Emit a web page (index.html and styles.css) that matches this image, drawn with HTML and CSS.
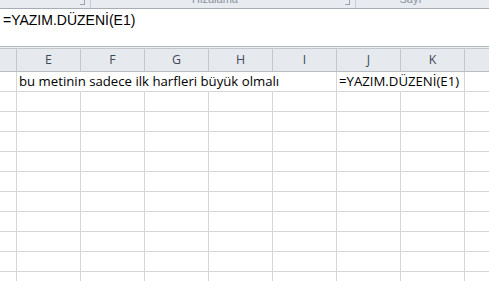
FILE: index.html
```
<!DOCTYPE html>
<html lang="tr">
<head>
  <meta charset="UTF-8">
  <title>YAZIM.DÜZENİ</title>
  <link rel="stylesheet" href="styles.css">
</head>
<body>
  <div class="ribbon">
    <div class="grup g1"><span class="ok"></span></div>
    <div class="grup g2"><span class="baslik">Hizalama</span><span class="ok"></span></div>
    <div class="grup g3"><span class="baslik">Sayı</span></div>
  </div>

  <div class="formul">=YAZIM.DÜZENİ(E1)</div>
  <div class="ayrac"></div>

  <div class="sayfa">
    <div class="hucre kose"></div>
    <div class="hucre bas">E</div>
    <div class="hucre bas">F</div>
    <div class="hucre bas">G</div>
    <div class="hucre bas">H</div>
    <div class="hucre bas">I</div>
    <div class="hucre bas">J</div>
    <div class="hucre bas">K</div>
    <div class="hucre bas"></div>
  </div>
  <div class="sayfa" id="satirlar">
    <div class="hucre no"></div>
    <div class="hucre tasan bos">bu metinin sadece ilk harfleri büyük olmalı</div>
    <div class="hucre bos"></div>
    <div class="hucre bos"></div>
    <div class="hucre bos"></div>
    <div class="hucre"></div>
    <div class="hucre tasan bos">=YAZIM.DÜZENİ(E1)</div>
    <div class="hucre"></div>
    <div class="hucre"></div>
  </div>

  <script>
    // bos satirlari doldur
    const satirlar = document.getElementById('satirlar');
    for (let r = 0; r < 10; r++) {
      satirlar.innerHTML += '<div class="hucre no"></div>' + '<div class="hucre"></div>'.repeat(8);
    }
  </script>
</body>
</html>
```

FILE: styles.css
```
body {
  margin: 0;
  background-color: #fff;
  font-family: "Liberation Sans", Arial, sans-serif;
  overflow: hidden;
}
.ribbon {
  display: flex;
  height: 8px;
  background-color: #e8ecf1;
  border-bottom: 1px solid #a6adb6;
  overflow: hidden;
}
.grup {
  display: flex;
  justify-content: center;
  position: relative;
  border-right: 1px solid #c8ced6;
  box-sizing: border-box;
}
.g1 { width: 91px; }
.g2 { width: 265px; padding-right: 16px; }
.g3 { width: 133px; padding-right: 24px; border-right: none; }
.baslik {
  font-size: 11px;
  color: #8a929c;
  line-height: 11px;
  margin-top: -6px;
}
.ok {
  position: absolute;
  right: 5px;
  top: 0;
  width: 4px;
  height: 4px;
  border-right: 1px solid #9aa2ac;
  border-bottom: 1px solid #9aa2ac;
}
.formul {
  height: 38px;
  padding: 3px 3px 0;
  box-sizing: border-box;
  font-size: 14px;
  line-height: 17px;
  color: #000;
  border-bottom: 1px solid #b2b8bf;
}
.ayrac {
  height: 1px;
  background-color: #eef0f3;
  border-bottom: 1px solid #c2c7cd;
}
.sayfa {
  display: grid;
  grid-template-columns: 17px repeat(8, 64px);
  font-family: "Open Sans", "Noto Sans", sans-serif;
}
.hucre {
  height: 20px;
  border-right: 1px solid #d6d6d6;
  border-bottom: 1px solid #d6d6d6;
  box-sizing: border-box;
  font-size: 13.2px;
  line-height: 19px;
  color: #000;
  white-space: nowrap;
}
.bas, .kose {
  height: 23px;
  background-color: #e6e9ee;
  border-right-color: #c4c8ce;
  border-bottom-color: #b8bdc4;
  text-align: center;
  color: #3f4a57;
  font-size: 12.4px;
  line-height: 21px;
}
.tasan {
  padding-left: 2px;
  position: relative;
  z-index: 1;
}
.bos {
  border-right-color: transparent;
}
```
